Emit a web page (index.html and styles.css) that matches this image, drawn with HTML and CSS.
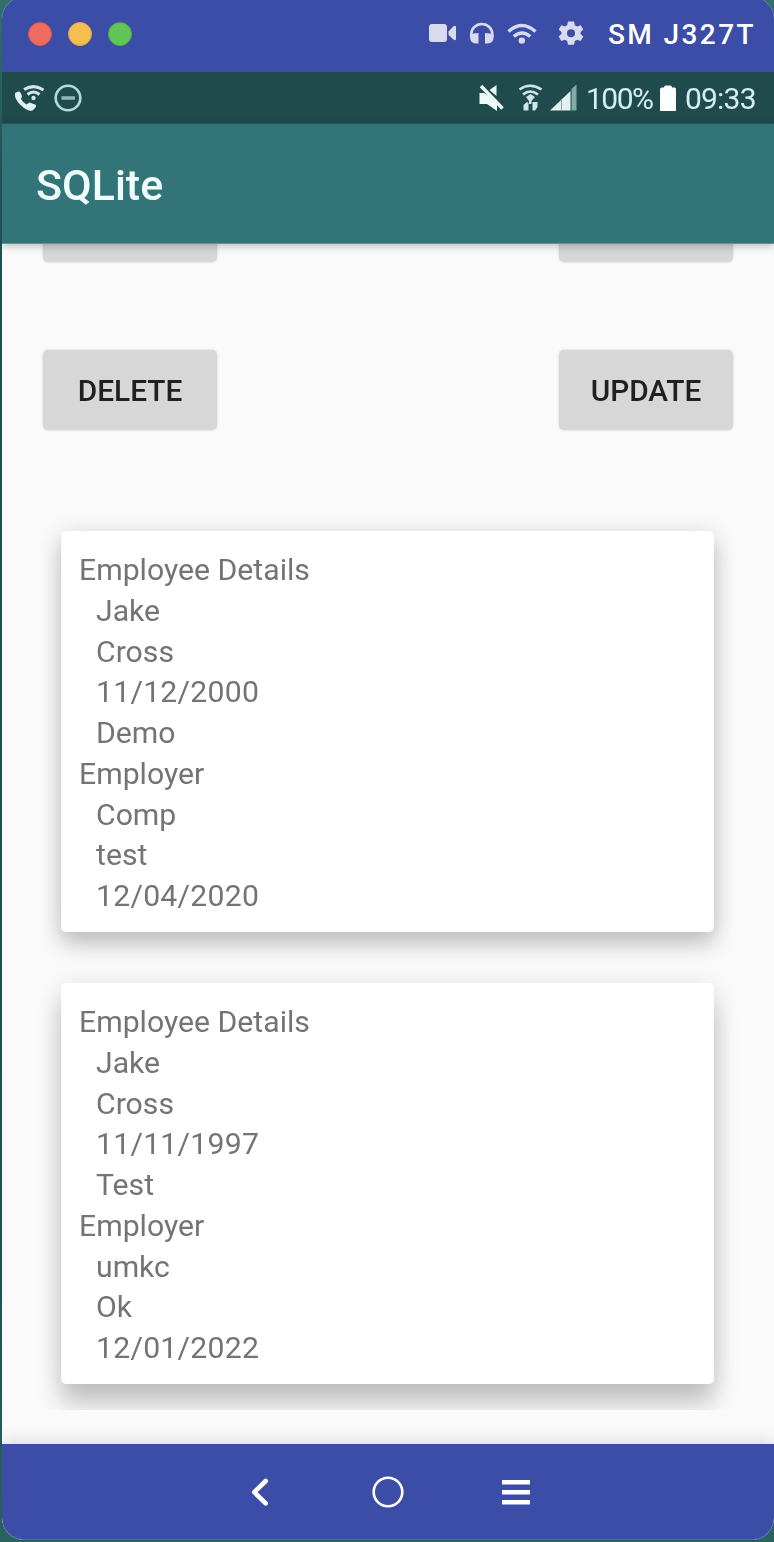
FILE: index.html
```html
<!DOCTYPE html>
<html lang="en">
<head>
<meta charset="utf-8">
<title>SM J327T</title>
<link rel="stylesheet" href="styles.css">
</head>
<body>
<div class="window">
  <header class="titlebar">
    <div class="lights"><i class="light red"></i><i class="light yellow"></i><i class="light green"></i></div>
    <svg class="tools" width="156" height="30" viewBox="0 0 156 30" fill="#d8dbee">
      <rect x="1" y="5" width="18" height="18" rx="3"/>
      <path d="M20.500 12.500 25.500 7.300Q28 6 28 8V20Q28 22 25.500 20.500L20.500 16Z"/>
      <path d="M43.200 18V15.500A10.600 10.600 0 0 1 64.400 15.500V18" fill="none" stroke="#d8dbee" stroke-width="2.500"/>
      <path d="M42 16Q45 14 50.500 14V24.500H48Q42 24 42 18ZM65.600 16Q62.500 14 57 14V24.500H59.500Q65.600 24 65.600 18Z"/>
      <g fill="none" stroke="#d8dbee" stroke-width="3.400"><path d="M80.500 12.500Q94 .5 107.500 12.500M85.800 17.500Q94 10.500 102.200 17.500"/></g>
      <circle cx="93.800" cy="21.600" r="3.200"/>
      <path fill-rule="evenodd" d="M140 2.500h6l.8 3.700 2.400 1.300 3.500-1.200 2.600 4.300-2.700 2.500v2l2.700 2.500-2.600 4.300-3.500-1.200-2.400 1.300-.8 3.700h-6l-.8-3.700-2.400-1.300-3.500 1.200-2.600-4.300 2.700-2.500v-2l-2.700-2.500 2.600-4.300 3.500 1.200 2.400-1.300ZM143 10.200a4 4 0 1 0 0 8 4 4 0 0 0 0-8Z"/>
    </svg>
    <span class="device">SM J327T</span>
  </header>
  <div class="statusbar">
    <svg class="status-left" width="74" height="32" viewBox="0 0 74 32" fill="none">
      <path fill="#e0f2f3" d="M3 9 6 7.500Q8 7 9 9.500L10 12.500 9 15Q11 18.500 14.500 20.500L17.500 18.500 23 20.500Q25 21.500 23.500 23.500L20.500 26.500Q16 28 8.500 21Q2 14.500 3 9Z"/>
      <g stroke="#cfe5e7" stroke-width="3"><path d="M12 5.500Q22 -.5 31.500 6M15.500 10.500Q21.500 5.500 27.500 10.500"/></g>
      <circle cx="21.500" cy="14" r="2.200" fill="#cfe5e7"/>
      <circle cx="56" cy="14" r="12.300" stroke="#b3dadb" stroke-width="2.600"/>
      <path d="M49.500 14H63" stroke="#8dbbbb" stroke-width="3.500"/>
    </svg>
    <div class="status-right">
      <svg class="signals" width="104" height="32" viewBox="0 0 104 32" fill="none">
        <path fill="#eef9f9" d="M3.500 9H8L15 13.500 21 20V27L11 20H3.500ZM13.500 6 20.500 1V12Z"/>
        <path d="M5 2 26.500 24.500" stroke="#eef9f9" stroke-width="3.400"/>
        <g stroke="#cfe5e7" stroke-width="2.500"><path d="M43.500 5.500Q54 -2 65.500 5.500M47 10.500Q54 4.500 62 10.500"/></g>
        <path fill="#cfe5e7" d="m50 13 4.500-3 4.500 3-3.500 4v3h-2.500v-3zM47.500 21l3.500-3 1.500 1v7.500h-5zM56.500 18h5v5L59 26.500h-2.500z"/>
        <path fill="#e2f0f0" d="M74 26.500 94.500 7V26.500Z"/>
        <path fill="#83aaaa" d="M95.500 5 100.500.5V26.500H95.500Z"/>
        <path d="M85.500 15V26.500" stroke="#8e9f9f"/>
      </svg>
      <span class="status-text percent">100%</span>
      <svg class="battery" width="18" height="27" viewBox="0 0 18 27"><path fill="#fff" d="M1 4.500Q1 2.500 3 2.500H5Q5 .5 7 .5H11Q13 .5 13 2.500H15.500Q17 2.500 17 4.500V26H1Z"/></svg>
      <span class="status-text clock">09:33</span>
    </div>
  </div>
  <div class="appbar"><span class="soft">SQLite</span></div>
  <main class="content">
    <div class="buttons clipped"><div class="button"></div><div class="button"></div></div>
    <div class="buttons"><div class="button"><span class="soft">DELETE</span></div><div class="button"><span class="soft">UPDATE</span></div></div>
    <div class="list">
      <section class="card">
        <p>Employee Details</p><p class="sub">Jake</p><p class="sub">Cross</p><p class="sub date">11/12/2000</p><p class="sub">Demo</p>
        <p>Employer</p><p class="sub">Comp</p><p class="sub">test</p><p class="sub date">12/04/2020</p>
      </section>
      <section class="card last">
        <p>Employee Details</p><p class="sub">Jake</p><p class="sub">Cross</p><p class="sub date">11/11/1997</p><p class="sub">Test</p>
        <p>Employer</p><p class="sub">umkc</p><p class="sub">Ok</p><p class="sub date">12/01/2022</p>
      </section>
    </div>
  </main>
  <nav class="navbar">
    <svg width="284" height="36" viewBox="0 0 284 36" fill="none" stroke="#fff">
      <path d="M17.700 7 6.300 18.200 17.700 29.400" stroke-width="4.600" stroke-linecap="round" stroke-linejoin="round"/>
      <circle cx="140" cy="18" r="14.300" stroke-width="2.600"/>
      <path d="M254 8.200h28M254 18.200h28M254 28.200h28" stroke-width="4.400"/>
    </svg>
  </nav>
</div>
</body>
</html>
```
FILE: styles.css
```css
* { box-sizing: border-box; }
body {
  margin: 0;
  height: 1542px;
  padding-left: 2px;
  overflow: hidden;
  background: linear-gradient(#32706d, #1f5053 12%, #1f5354 85%, #2a625e);
  font-family: Roboto, "Liberation Sans", sans-serif;
}
.window {
  width: 772px;
  height: 1543px;
  margin-top: -3px;
  display: flex;
  flex-direction: column;
  border-radius: 22px;
  overflow: hidden;
  background: #fafafa;
}
.titlebar {
  flex: 0 0 75px;
  padding: 3px 17px 0 26px;
  display: flex;
  align-items: center;
  background: #3b4da7;
}
.lights { display: flex; gap: 16px; margin-top: -4px; }
.light { width: 24px; height: 24px; border-radius: 50%; border: 1px solid; }
.red { background: #ee6b60; border-color: #d95650; }
.yellow { background: #f6be50; border-color: #dda643; }
.green { background: #62c656; border-color: #52ac45; }
.tools { margin: -4px 0 0 296px; }
.device {
  margin: -3px 0 0 24px;
  color: #fff;
  font-size: 28px;
  font-weight: 500;
  letter-spacing: 2.4px;
  white-space: nowrap;
}
.statusbar {
  flex: 0 0 52px;
  padding: 12px 18px 0 10px;
  display: flex;
  justify-content: space-between;
  background: #1f4b4c;
  border-bottom: 1px solid #285e60;
}
.statusbar svg, .status-text, .soft, .card p { filter: blur(.6px); }
.status-right { display: flex; }
.signals { margin-right: 2px; }
.battery { margin: 1px 8px 0 7px; }
.status-text {
  color: #d6eeee;
  font-size: 30px;
  line-height: 30px;
  white-space: nowrap;
}
.percent { width: 66px; margin-left: 4px; letter-spacing: -1.5px; }
.clock { width: 71px; letter-spacing: -.8px; }
.appbar {
  flex: 0 0 120px;
  padding-left: 34px;
  display: flex;
  align-items: center;
  position: relative;
  z-index: 1;
  background: #337479;
  border-bottom: 1px solid #639598;
  box-shadow: 0 1px 9px rgba(0, 0, 0, .3);
  color: #effcfc;
  font-size: 43px;
  font-weight: 500;
  line-height: 60px;
}
.appbar .soft { margin-top: 3px; }
.content { flex: 1; min-height: 0; overflow: hidden; }
.buttons { display: flex; justify-content: space-between; padding: 0 41px; }
.button {
  width: 174px;
  height: 80px;
  display: flex;
  align-items: center;
  justify-content: center;
  border-radius: 5px;
  background: #d7d7d7;
  box-shadow: 0 0 3px rgba(0, 0, 0, .16);
  color: #202020;
  font-size: 29.800px;
  font-weight: 500;
}
.button .soft { margin-top: 1px; }
.clipped { margin: -62px 0 88px; }
.clipped + .buttons { margin-bottom: 71px; }
.list {
  width: 702px;
  height: 909px;
  margin-left: 34px;
  padding: 30px 24px 0 25px;
  overflow: hidden;
}
.card {
  height: 401px;
  padding: 19px 18px;
  margin-bottom: 51px;
  border-radius: 5px;
  background: #fff;
  box-shadow: 0 12px 22px rgba(0, 0, 0, .22), 0 0 26px rgba(30, 15, 60, .08);
  color: #747474;
  font-size: 30.200px;
}
.card.last { box-shadow: 0 20px 24px rgba(0, 0, 0, .21), 0 0 26px rgba(30, 15, 60, .08); }
.card p { margin: 0; line-height: 40.750px; }
.card .sub { padding-left: 17px; }
.card .date { letter-spacing: .25px; }
.navbar {
  flex: 0 0 96px;
  padding: 30px 0 0 246px;
  position: relative;
  background: #3b4da7;
  border-radius: 0 0 22px 22px;
  box-shadow: inset 0 -1px #5064b5, 0 -4px 16px rgba(0, 0, 0, .12);
}
```
